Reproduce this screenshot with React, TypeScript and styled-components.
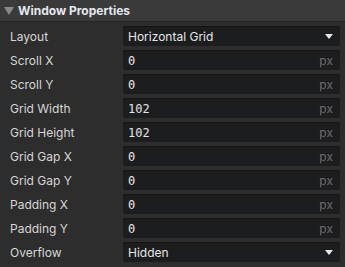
import styled, { createGlobalStyle } from "styled-components";

const GlobalStyle = createGlobalStyle`
  html, body {
    margin: 0;
    padding: 0;
    background: #2d2d2d;
  }
`;

const Panel = styled.div`
  width: 345px;
  height: 267px;
  background: #2d2d2d;
  font-family: Inter, "Noto Sans", sans-serif;
  font-size: 12px;
  color: #d4d4d4;
  overflow: hidden;
`;

const Header = styled.div`
  height: 21px;
  display: flex;
  align-items: center;
  gap: 4px;
  padding-left: 4px;
  background: #3a3a3a;
  border-bottom: 1px solid #262626;
  font-weight: 700;
  font-size: 12px;
  color: #e4e8ee;
`;

const Caret = styled.span`
  width: 0;
  height: 0;
  border-left: 5px solid transparent;
  border-right: 5px solid transparent;
  border-top: 8px solid #8a8a8a;
`;

const Body = styled.div`
  display: flex;
  flex-direction: column;
  gap: 4px;
  padding: 4px 5px 0 10px;
`;

const Row = styled.div`
  display: grid;
  grid-template-columns: 113px 1fr;
  align-items: center;
  height: 20px;
`;

const Label = styled.span`
  color: #d6d6d6;
`;

const Field = styled.div`
  height: 20px;
  box-sizing: border-box;
  display: flex;
  align-items: center;
  padding: 0 7px 0 5px;
  background: #1c1d1f;
  border-top: 1px solid #121212;
  border-radius: 2px;
`;

const Value = styled.span<{ $mono?: boolean }>`
  flex: 1;
  color: #e6e6e6;
  font-family: ${(p) => (p.$mono ? '"DejaVu Sans Mono", monospace' : 'Inter, "Noto Sans", sans-serif')};
  font-size: 12px;
`;

const Unit = styled.span`
  color: #6e6e6e;
  font-size: 12px;
`;

const Arrow = styled.span`
  width: 0;
  height: 0;
  border-left: 4px solid transparent;
  border-right: 4px solid transparent;
  border-top: 5px solid #e8e8e8;
`;

type Prop = { label: string; kind: "select" | "px"; value: string };

const props: Prop[] = [
  { label: "Layout", kind: "select", value: "Horizontal Grid" },
  { label: "Scroll X", kind: "px", value: "0" },
  { label: "Scroll Y", kind: "px", value: "0" },
  { label: "Grid Width", kind: "px", value: "102" },
  { label: "Grid Height", kind: "px", value: "102" },
  { label: "Grid Gap X", kind: "px", value: "0" },
  { label: "Grid Gap Y", kind: "px", value: "0" },
  { label: "Padding X", kind: "px", value: "0" },
  { label: "Padding Y", kind: "px", value: "0" },
  { label: "Overflow", kind: "select", value: "Hidden" },
];

export default function App() {
  return (
    <Panel>
      <GlobalStyle />
      <Header>
        <Caret />
        Window Properties
      </Header>
      <Body>
        {props.map((p) => (
          <Row key={p.label}>
            <Label>{p.label}</Label>
            <Field>
              <Value $mono={p.kind === "px"}>{p.value}</Value>
              {p.kind === "px" ? <Unit>px</Unit> : <Arrow />}
            </Field>
          </Row>
        ))}
      </Body>
    </Panel>
  );
}
